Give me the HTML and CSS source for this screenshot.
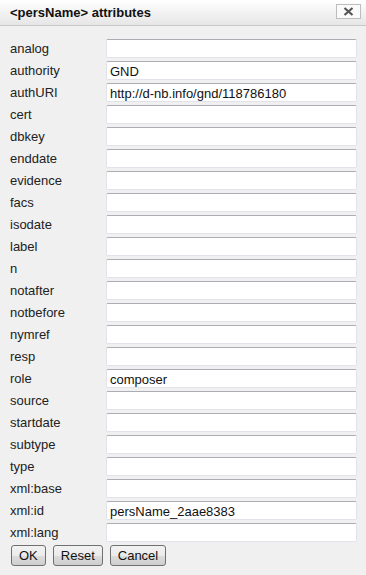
FILE: index.html
```html
<!DOCTYPE html>
<html lang="en">
<head>
    <meta charset="UTF-8">
    <title>persName attributes</title>
    <link rel="stylesheet" href="styles.css">
</head>
<body>
    <div class="dialog">
        <div class="titlebar">
            <span class="title">&lt;persName&gt; attributes</span>
            <button class="close" type="button">
                <svg width="11" height="9" viewBox="0 0 11 9"><path d="M1.5 1 L9.5 8 M9.5 1 L1.5 8" stroke="#555" stroke-width="2.2"/></svg>
            </button>
        </div>
        <form class="attrs">
            <label>analog</label><input type="text" value="">
            <label>authority</label><input type="text" value="GND">
            <label>authURI</label><input type="text" value="http://d-nb.info/gnd/118786180">
            <label>cert</label><input type="text" value="">
            <label>dbkey</label><input type="text" value="">
            <label>enddate</label><input type="text" value="">
            <label>evidence</label><input type="text" value="">
            <label>facs</label><input type="text" value="">
            <label>isodate</label><input type="text" value="">
            <label>label</label><input type="text" value="">
            <label>n</label><input type="text" value="">
            <label>notafter</label><input type="text" value="">
            <label>notbefore</label><input type="text" value="">
            <label>nymref</label><input type="text" value="">
            <label>resp</label><input type="text" value="">
            <label>role</label><input type="text" value="composer">
            <label>source</label><input type="text" value="">
            <label>startdate</label><input type="text" value="">
            <label>subtype</label><input type="text" value="">
            <label>type</label><input type="text" value="">
            <label>xml:base</label><input type="text" value="">
            <label>xml:id</label><input type="text" value="persName_2aae8383">
            <label>xml:lang</label><input type="text" value="">
        </form>
        <div class="buttons">
            <button type="button">OK</button>
            <button type="button">Reset</button>
            <button type="button" class="cancel">Cancel</button>
        </div>
    </div>
</body>
</html>
```

FILE: styles.css
```css
*{
    margin: 0;
    padding: 0;
    box-sizing: border-box;
}
body{
    background-color: #f0f0f0;
    font-family: "Liberation Sans", Arial, sans-serif;
    font-size: 13px;
    color: #222;
}
.titlebar{
    height: 26px;
    display: flex;
    align-items: center;
    justify-content: space-between;
    padding: 0 5px 0 10px;
    background: linear-gradient(#ffffff, #e6e6e6);
    border-bottom: 1px solid #c9c9c9;
}
.title{
    font-weight: bold;
    font-size: 13px;
    color: #111;
    margin-top: -1px;
}
.close{
    width: 25px;
    height: 15px;
    margin-top: -2px;
    border: 1px solid #bdbdbd;
    background: #fafafa;
    display: flex;
    align-items: center;
    justify-content: center;
}
.attrs{
    display: grid;
    grid-template-columns: 96px 251px;
    row-gap: 3px;
    padding: 13px 0 0 10px;
}
.attrs label{
    height: 19px;
    line-height: 20px;
}
.attrs input{
    height: 19px;
    width: 251px;
    border: 1px solid #e2e3ea;
    border-top-color: #abadb3;
    border-radius: 2px;
    background: #fff;
    font-family: "Liberation Sans", Arial, sans-serif;
    font-size: 13px;
    color: #111;
    padding: 1px 3px 0;
    outline: none;
}
.buttons{
    display: flex;
    gap: 7px;
    padding: 3px 0 0 11px;
}
.buttons button{
    height: 21px;
    padding: 0 7px;
    border: 1px solid #707070;
    border-radius: 3px;
    background: linear-gradient(#f2f2f2 0%, #ebebeb 50%, #dddddd 51%, #cfcfcf 100%);
    font-family: "Liberation Sans", Arial, sans-serif;
    font-size: 13px;
    color: #111;
}
.buttons .cancel{
    width: 56px;
}
```
